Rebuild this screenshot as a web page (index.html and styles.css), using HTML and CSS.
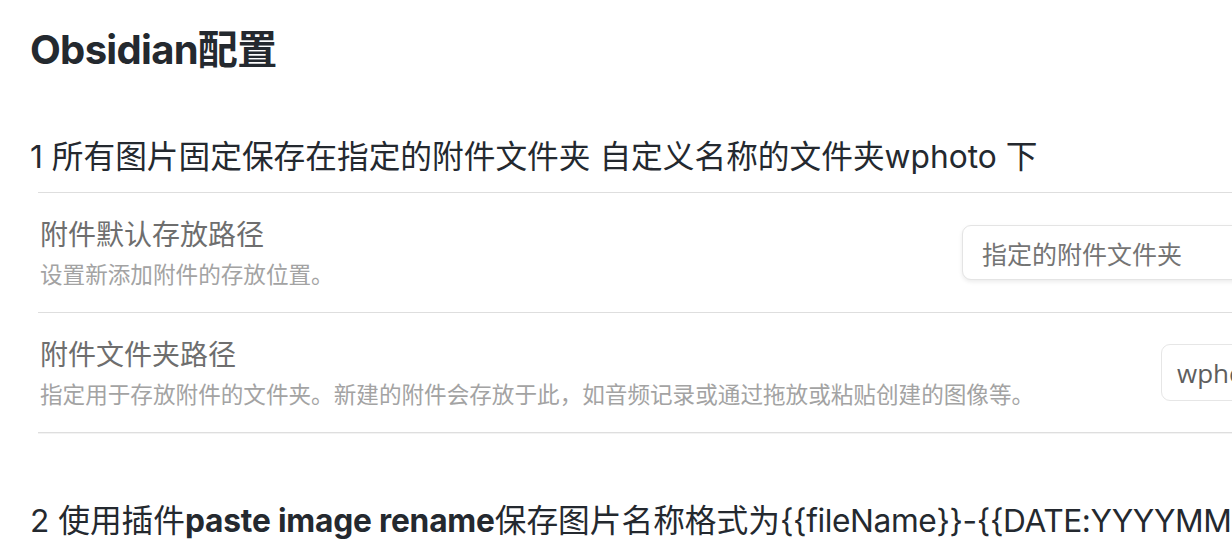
FILE: index.html
```html
<!DOCTYPE html>
<html lang="zh-CN">
<head>
<meta charset="utf-8">
<title>Obsidian配置</title>
<link rel="stylesheet" href="styles.css">
</head>
<body>
<main class="page">
  <h1 class="title">Obsidian配置</h1>
  <p class="para">1 所有图片固定保存在指定的附件文件夹 自定义名称的文件夹wphoto 下</p>
  <div class="shot">
    <div class="setting">
      <div class="info">
        <div class="name">附件默认存放路径</div>
        <div class="desc">设置新添加附件的存放位置。</div>
      </div>
      <div class="control">
        <div class="dropdown">指定的附件文件夹</div>
      </div>
    </div>
    <div class="setting">
      <div class="info">
        <div class="name">附件文件夹路径</div>
        <div class="desc">指定用于存放附件的文件夹。新建的附件会存放于此，如音频记录或通过拖放或粘贴创建的图像等。</div>
      </div>
      <div class="control">
        <div class="textbox">wphoto</div>
      </div>
    </div>
  </div>
  <p class="para para-last">2 使用插件<strong>paste image rename</strong>保存图片名称格式为<span class="latin">{{fileName}}-{{DATE:YYYYMMDDHHmmss}}</span></p>
</main>
</body>
</html>
```
FILE: styles.css
```css
html, body {
  margin: 0;
  padding: 0;
  background: #ffffff;
  overflow: hidden;
}

body {
  width: 1232px;
  height: 542px;
  font-family: "Inter", "Noto Sans CJK SC", sans-serif;
  color: #24292f;
}

.page {
  width: 1500px;
  padding: 25px 0 0 30px;
}

.title {
  margin: 0;
  font-size: 40px;
  line-height: 50px;
  font-weight: 700;
  letter-spacing: -0.7px;
  color: #24292f;
}

.para {
  margin: 58px 0 0 0;
  font-size: 31.7px;
  line-height: 48px;
  font-weight: 400;
  white-space: nowrap;
}

.para strong {
  font-weight: 700;
  letter-spacing: -0.2px;
}

.para .latin {
  letter-spacing: -0.4px;
}

.para-last {
  margin-top: 64px;
}

.shot {
  margin: 11px 0 0 8px;
  width: 1310px;
  border-bottom: 1px solid #dedede;
  box-shadow: 0 1px 0 #f3f3f3;
  font-family: "Noto Sans CJK SC", sans-serif;
}

.setting {
  display: flex;
  align-items: center;
  padding: 22px 20px 22px 2px;
  border-top: 1px solid #dedede;
}

.info {
  flex: 1;
  min-width: 0;
}

.name {
  font-size: 28px;
  line-height: 36px;
  color: #6e6e6e;
}

.desc {
  margin-top: 7px;
  font-size: 22.6px;
  line-height: 32px;
  color: #a3a3a3;
  white-space: nowrap;
}

.control {
  flex: none;
  display: flex;
}

.dropdown {
  width: 366px;
  height: 55px;
  box-sizing: border-box;
  padding-left: 19px;
  display: flex;
  align-items: center;
  font-size: 25px;
  color: #747474;
  border: 1px solid #e4e4e4;
  border-radius: 9px;
  box-shadow: 0 2px 4px rgba(0, 0, 0, 0.08);
  background: #fff;
}

.textbox {
  width: 167px;
  height: 57px;
  box-sizing: border-box;
  padding-left: 15px;
  display: flex;
  align-items: center;
  font-family: "Open Sans", "Noto Sans CJK SC", sans-serif;
  font-size: 26px;
  color: #5e5e5e;
  border: 1px solid #e6e6e6;
  border-radius: 9px;
  background: #fff;
}
```
